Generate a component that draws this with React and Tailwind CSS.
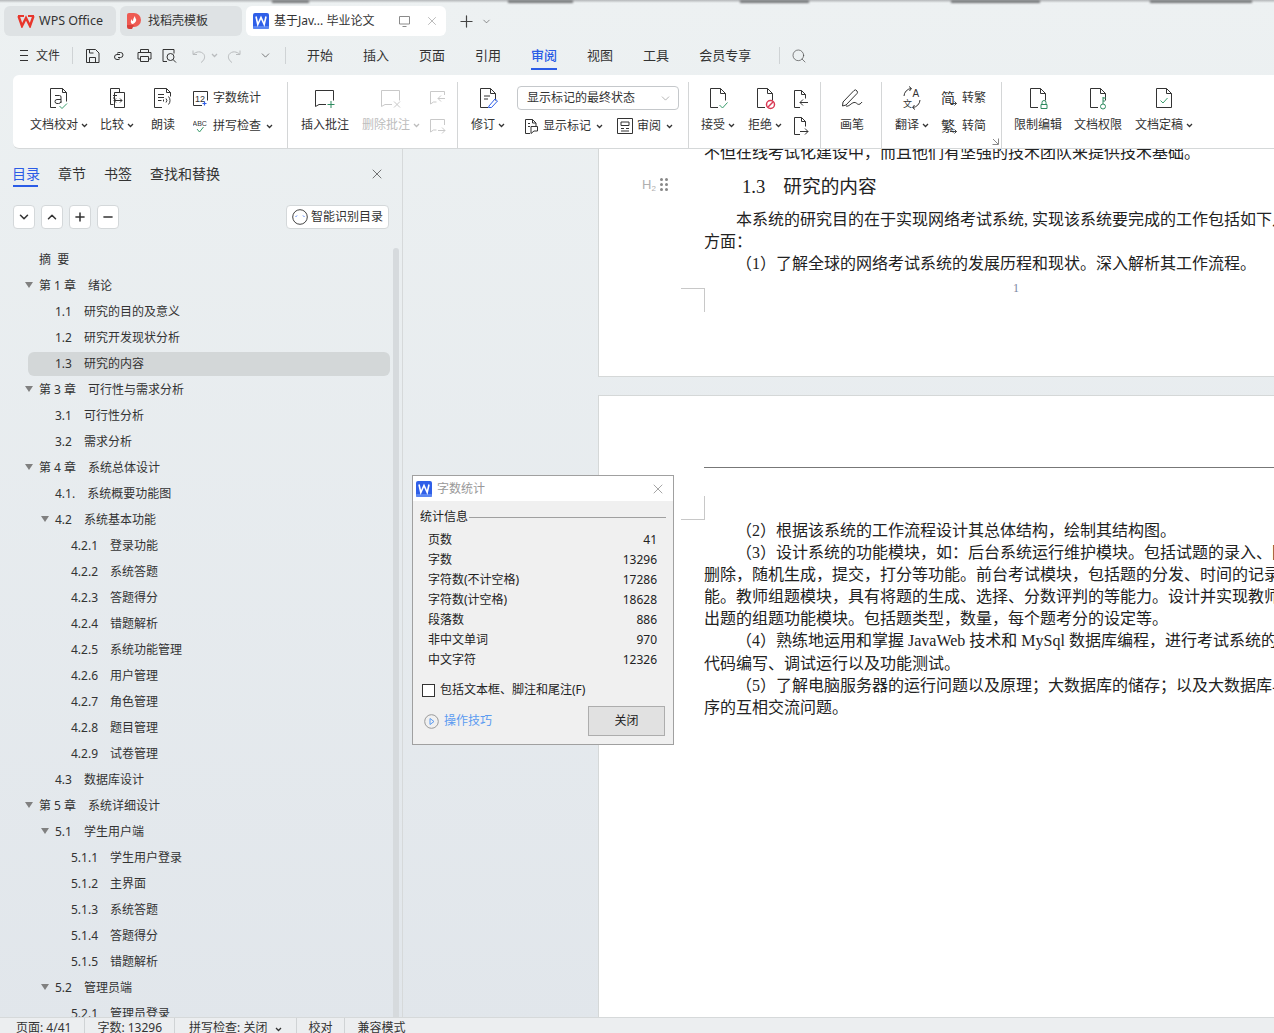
import React from 'react';
import { X, Plus, Minus, ChevronDown, ChevronUp, Search } from 'lucide-react';

const Ico = ({ size = 24, view = 24, className = '', children }) => (
  <svg width={size} height={size} viewBox={`0 0 ${view} ${view}`} fill="none" stroke="currentColor" strokeWidth="1" className={`shrink-0 ${className}`}>
    {children}
  </svg>
);

const Caret = ({ className = '' }) => (
  <svg width="7" height="5" viewBox="0 0 7 5" fill="none" stroke="currentColor" strokeWidth="1.3" className={`shrink-0 ${className}`}>
    <path d="M1 1l2.5 2.5L6 1" />
  </svg>
);

const Doc = ({ children }) => (
  <Ico>
    <path d="M12 21.5H4.5v-19h10l5 5v7" stroke="#333" />
    <path d="M14.5 2.5v5h5" stroke="#333" />
    {children}
  </Ico>
);

const WordLogo = ({ size = 16 }) => (
  <svg width={size} height={size} viewBox="0 0 16 16" className="shrink-0">
    <rect width="16" height="16" rx="2" fill="#2f5fe8" />
    <rect y="13" width="16" height="3" rx="1" fill="#5b86f2" />
    <path d="M3 3.5l1.8 8 3.2-7 3.200 7 1.800-8" fill="none" stroke="#fff" strokeWidth="1.600" />
  </svg>
);

const BigBtn = ({ icon, label, caret, width, className = '', dim }) => (
  <div className={`flex flex-col items-center shrink-0 ${width} ${className}`}>
    <div className="h-[24px] flex items-center justify-center">{icon}</div>
    <div className={`mt-[6px] h-[18px] flex items-center gap-[3px] whitespace-nowrap ${dim ? 'text-[#bdbdbd]' : ''}`}>
      {label}
      {caret && <Caret />}
    </div>
  </div>
);

const Sep = ({ className = '' }) => <div className={`w-px h-[66px] bg-[#d4d6d7] shrink-0 ${className}`} />;

const Ribbon = () => (
  <div className="ml-[13px] mt-[3px] h-[74px] bg-white rounded-l-[6px] border-b border-[#d5d8d9] flex items-start pt-[7px] text-[12px] text-[#333] overflow-hidden">
    <BigBtn
      width="w-[60px]"
      className="ml-[16px] pt-[4px]"
      label="文档校对"
      caret
      icon={
        <Ico>
          <path d="M9 21.500H3.500v-19h12l4 4v9" stroke="#333" />
          <path d="M15.500 2.500v4h4" stroke="#333" />
          <path d="M8 9.500h4.500a1.500 1.500 0 0 1 1.500 1.500v6M14 13.500H10a2 2 0 0 0 0 4h1.500a2.500 2.500 0 0 0 2.500-2" stroke="#333" />
          <path d="M12.500 20l2.500 2.500 5-5" stroke="#3a9c6d" />
        </Ico>
      }
    />
    <BigBtn
      width="w-[34px]"
      className="ml-[11px] pt-[4px]"
      label="比较"
      caret
      icon={
        <Ico>
          <path d="M5.500 2.500h9v4M5.500 2.500v16h3M9.500 6.500h10v15h-10z" stroke="#333" />
          <path d="M8 9.500h4M8 12h2M9 14.500h8M9 14.500l2-2M9 14.500l2 2M17 14.500l-2-2M17 14.500l-2 2" stroke="#333" />
        </Ico>
      }
    />
    <BigBtn
      width="w-[24px]"
      className="ml-[17px] pt-[4px]"
      label="朗读"
      icon={
        <Ico>
          <path d="M11 21.500H3.500v-19h12l4 4v4" stroke="#333" />
          <path d="M15.500 2.500v4h4M7 8.500h6M7 11.500h6M7 14.500h3.500" stroke="#333" />
          <path d="M15 12.500a3 3 0 0 1 0 4M17.500 10.500a6 6 0 0 1 0 8M12.500 13.500v2" stroke="#333" />
        </Ico>
      }
    />
    <div className="ml-[18px] w-[84px] shrink-0 flex flex-col pt-[4px]">
      <div className="h-[24px] flex items-center gap-[5px] whitespace-nowrap">
        <Ico size={15} view={15}>
          <path d="M9 14.500H.500V.500h14v9" stroke="#333" />
          <path d="M11.500 10.500v4M9.500 12.500h4" stroke="#2f5fe8" strokeWidth="1.200" />
          <text x="2" y="10.500" fontSize="9" fill="#333" stroke="none" fontFamily="Liberation Sans">12</text>
        </Ico>
        字数统计
      </div>
      <div className="mt-[4px] h-[24px] flex items-center gap-[5px] whitespace-nowrap">
        <Ico size={15} view={15}>
          <text x="-.5" y="7" fontSize="7" fill="#333" stroke="none" fontFamily="Liberation Sans">ABC</text>
          <path d="M4 10l2.500 3 4-5" stroke="#3a9c6d" />
        </Ico>
        拼写检查
        <Caret />
      </div>
    </div>
    <Sep className="ml-[10px]" />
    <BigBtn
      width="w-[48px]"
      className="ml-[13px] pt-[4px]"
      label="插入批注"
      icon={
        <Ico>
          <path d="M13 18.500H6l-3.500 2v-16h18v10" stroke="#333" />
          <path d="M18 15v7M14.500 18.500h7" stroke="#2d8a5f" />
        </Ico>
      }
    />
    <BigBtn
      width="w-[60px]"
      className="ml-[12px] pt-[4px]"
      label="删除批注"
      caret
      dim
      icon={
        <Ico>
          <path d="M13 18.500H6l-3.500 2v-16h18v10" stroke="#c9c9c9" />
          <path d="M15 15.500l6 6M21 15.500l-6 6" stroke="#c9c9c9" />
        </Ico>
      }
    />
    <div className="ml-[8px] w-[16px] shrink-0 flex flex-col items-center gap-[11px] pt-[8px]">
      <Ico size={17} view={17}>
        <path d="M15.500 5V1.500h-14V14l3-2h3" stroke="#c9c9c9" />
        <path d="M16 8.500H9M9 8.500l3-3M9 8.500l3 3" stroke="#c9c9c9" />
      </Ico>
      <Ico size={17} view={17}>
        <path d="M15.500 7V1.500h-14V14l3-2h3" stroke="#c9c9c9" />
        <path d="M9 12.500h7M16 12.500l-3-3M16 12.500l-3 3" stroke="#c9c9c9" />
      </Ico>
    </div>
    <Sep className="ml-[12px]" />
    <BigBtn
      width="w-[34px]"
      className="ml-[13px] pt-[4px]"
      label="修订"
      caret
      icon={
        <Doc>
          <path d="M8 10h6M8 13h4" stroke="#333" />
          <path d="M13 20l6-7 2.500 2-6 6.500h-3z" stroke="#2f5fe8" />
        </Doc>
      }
    />
    <div className="ml-[12px] w-[162px] shrink-0 flex flex-col">
      <div className="h-[24px] mt-[4px] rounded-[4px] border border-[#c5c8cb] flex items-center justify-between pl-[9px] pr-[6px]">
        <span className="whitespace-nowrap">显示标记的最终状态</span>
        <ChevronDown size={13} strokeWidth={1} className="text-[#777]" />
      </div>
      <div className="mt-[7px] h-[18px] flex items-center whitespace-nowrap">
        <span className="ml-[7px] mr-[4px]">
          <Ico size={15} view={15}>
            <path d="M6 14.500H1.500V.500h7l3.500 3.500v3M8.500.500V4H12M4 4.500h2M4 7.500h2M7 7.500h6.500V12H10l-3 2.500z" stroke="#333" />
          </Ico>
        </span>
        显示标记
        <Caret className="ml-[5px]" />
        <span className="ml-[14px] mr-[4px]">
          <Ico size={16} view={16}>
            <path d="M.500.500h15v15H.500zM4 4h8v3.500H4zM4 10.500h3M9 10.500h3M4 13h8" stroke="#333" />
          </Ico>
        </span>
        审阅
        <Caret className="ml-[5px]" />
      </div>
    </div>
    <Sep className="ml-[9px]" />
    <BigBtn
      width="w-[34px]"
      className="ml-[12px] pt-[4px]"
      label="接受"
      caret
      icon={
        <Doc>
          <path d="M13.500 19l3 3 5-5.500" stroke="#3a9c6d" />
        </Doc>
      }
    />
    <BigBtn
      width="w-[34px]"
      className="ml-[13px] pt-[4px]"
      label="拒绝"
      caret
      icon={
        <Doc>
          <circle cx="17.500" cy="18.500" r="4" stroke="#d93a55" strokeWidth="1.500" />
          <path d="M14.800 21.200l5.400-5.400" stroke="#d93a55" strokeWidth="1.500" />
        </Doc>
      }
    />
    <div className="ml-[11px] w-[16px] shrink-0 flex flex-col items-center gap-[9px] pt-[8px]">
      <Ico size={18} view={18}>
        <path d="M8 17.500H2.500V.500h7l4 4v4M9.500.500v4h4" stroke="#333" />
        <path d="M16 12.500H8M8 12.500l3-3M8 12.500l3 3" stroke="#333" />
      </Ico>
      <Ico size={18} view={18}>
        <path d="M8 17.500H2.500V.500h7l4 4v5M9.500.500v4h4" stroke="#333" />
        <path d="M8 14.500h8M16 14.500l-3-3M16 14.500l-3 3" stroke="#333" />
      </Ico>
    </div>
    <Sep className="ml-[11px]" />
    <BigBtn
      width="w-[24px]"
      className="ml-[19px] pt-[4px]"
      label="画笔"
      icon={
        <Ico>
          <path d="M3 16L14 4.500a2 2 0 0 1 3 .500 2 2 0 0 1 0 2.500L6 19l-3.500 1z" stroke="#333" />
          <path d="M6 20c3 1 5-3 8-3.500 3-.500 3 3 6 1.500 1-.500 1.500-1.500 2-2" stroke="#333" />
        </Ico>
      }
    />
    <Sep className="ml-[17px]" />
    <BigBtn
      width="w-[34px]"
      className="ml-[13px] pt-[4px]"
      label="翻译"
      caret
      icon={
        <Ico>
          <path d="M4 10a8 8 0 0 1 7-7.500M9 .500l2.500 2-2 2.500M20 14a8 8 0 0 1-7 7.500M15 23.500l-2.500-2 2-2.500" stroke="#333" />
          <text x="12.500" y="10.500" fontSize="10" fill="#333" stroke="none" fontFamily="Liberation Sans">A</text>
          <text x="3" y="21" fontSize="9" fill="#333" stroke="none" fontFamily="Noto Sans CJK SC">文</text>
        </Ico>
      }
    />
    <div className="ml-[12px] shrink-0 flex flex-col pt-[4px]">
      <div className="h-[24px] flex items-center gap-[5px] whitespace-nowrap">
        <Ico size={16} view={16}>
          <text x="0" y="13" fontSize="14" fill="#333" stroke="none" fontFamily="Noto Sans CJK SC">简</text>
          <path d="M9 13.500h6.500M15.500 13.500l-2-2M15.500 13.500l-2 2" stroke="#333" strokeWidth=".9" />
        </Ico>
        转繁
      </div>
      <div className="mt-[4px] h-[24px] flex items-center gap-[5px] whitespace-nowrap">
        <Ico size={16} view={16}>
          <text x="0" y="13" fontSize="14" fill="#333" stroke="none" fontFamily="Noto Sans CJK SC">繁</text>
          <path d="M9 13.500h6.500M15.500 13.500l-2-2M15.500 13.500l-2 2" stroke="#333" strokeWidth=".9" />
        </Ico>
        转简
      </div>
    </div>
    <div className="self-end mb-[3px] ml-[6px] text-[#888] shrink-0">
      <Ico size={7} view={7}>
        <path d="M.500 6.500h6v-6M1 1l5 5" />
      </Ico>
    </div>
    <Sep className="ml-[2px]" />
    <BigBtn
      width="w-[48px]"
      className="ml-[12px] pt-[4px]"
      label="限制编辑"
      icon={
        <Doc>
          <path d="M15 20h6v4h-6z" stroke="#2d8a5f" transform="translate(0 -1.500)" />
          <path d="M16 18.500v-2a2 2 0 0 1 4 0v2" stroke="#2d8a5f" />
        </Doc>
      }
    />
    <BigBtn
      width="w-[48px]"
      className="ml-[12px] pt-[4px]"
      label="文档权限"
      icon={
        <Doc>
          <circle cx="17" cy="20.500" r="2.500" stroke="#2d8a5f" />
          <path d="M17 18v-7M17 12h3M17 15h2" stroke="#2d8a5f" />
        </Doc>
      }
    />
    <BigBtn
      width="w-[60px]"
      className="ml-[12px] pt-[4px]"
      label="文档定稿"
      caret
      icon={
        <Ico>
          <path d="M4.500 2.500h10l5 5v14h-15z" stroke="#333" />
          <path d="M14.500 2.500v5h5" stroke="#333" />
          <path d="M8.500 14.500l2.500 2.500 4.500-5" stroke="#3a9c6d" />
        </Ico>
      }
    />
  </div>
);

const TopBar = () => (
  <div className="h-[36px] pt-[6px] pl-[4px] flex items-stretch text-[12px] text-[#333]">
    <div className="w-[112px] rounded-[6px] bg-[#dee2e4] flex items-center pl-[13px] gap-[4px] text-[12.500px]">
      <svg width="18" height="14" viewBox="0 0 18 14" fill="none" stroke="#e8362c" strokeWidth="2.400" className="shrink-0">
        <path d="M1.500 2l3.500 10 4-8 4 8 3.500-10" />
        <path d="M1 2h6M11 2h6" strokeWidth="1.800" />
      </svg>
      WPS Office
    </div>
    <div className="ml-[4px] w-[122px] rounded-[6px] bg-[#dee2e4] flex items-center pl-[7px] gap-[7px]">
      <svg width="14" height="16" viewBox="0 0 14 16" className="shrink-0">
        <path d="M0 2a2 2 0 0 1 2-2h5a7 7 0 0 1 0 14H0z" fill="#ee5a52" />
        <path d="M0 12h7l-2 4H2a2 2 0 0 1-2-2z" fill="#d9403a" />
        <path d="M5 11c-2-2-1-4 0-5 0 2 .500 2 1 2 0-2 1-4 2-5 0 3 2 3 1 5-.500 1.500-2 3-4 3z" fill="#fff" />
      </svg>
      找稻壳模板
    </div>
    <div className="ml-[4px] w-[200px] rounded-[6px] bg-white flex items-center pl-[7px]">
      <WordLogo />
      <span className="ml-[5px] w-[124px] whitespace-nowrap">基于Jav... 毕业论文</span>
      <Ico size={13} view={13} className="text-[#8a8a8a]">
        <path d="M1.500 1.500h10v7.500h-10zM4.500 11.500h4" />
      </Ico>
      <X size={14} strokeWidth={1} className="ml-[14px] text-[#8a8a8a]" />
    </div>
    <Plus size={19} strokeWidth={1.5} className="ml-[11px] self-center text-[#444]" />
    <ChevronDown size={11} strokeWidth={1.4} className="ml-[5px] self-center text-[#555]" />
  </div>
);

const MenuBar = () => (
  <div className="h-[33px] mt-[3px] flex items-center pl-[20px] text-[13px] text-[#333]">
    <svg width="8" height="11" viewBox="0 0 8 11" stroke="#333" className="shrink-0">
      <path d="M0 .500h8M0 5.500h8M0 10.500h8" />
    </svg>
    <span className="ml-[8px] text-[12px]">文件</span>
    <div className="ml-[12px] w-px h-[17px] bg-[#cfd3d5]" />
    <Ico size={16} view={16} className="ml-[12px]">
      <path d="M1.500 1.500h9l3.500 3.500v9.500H1.500zM4.500 1.500v3.500h4M4.500 14.500v-5h6v5" />
    </Ico>
    <Ico size={14} view={14} className="ml-[11px]">
      <path d="M6 8.500H8.500a2.500 2.500 0 0 0 0-5H7a2.500 2.500 0 0 0-2 1M8 5.500H5a2.500 2.500 0 0 0 0 5h1a2.500 2.500 0 0 0 2-1" />
    </Ico>
    <Ico size={15} view={15} className="ml-[11px]">
      <path d="M3.500 4.500v-3h8v3M3.500 11H1V4.500h13V11h-2.500M3.500 8.500h8v5h-8z" />
    </Ico>
    <Ico size={15} view={15} className="ml-[10px]">
      <path d="M5 13.500H1V1.500h11v4" />
      <circle cx="8.500" cy="9" r="3.500" />
      <path d="M11 11.500l3 3" />
    </Ico>
    <Ico size={14} view={14} className="ml-[15px] text-[#b9bcbe]">
      <path d="M1 1.500v4h4M1 5.500c3-3 8-4 11 0 1.500 3 0 6-3 8" />
    </Ico>
    <Caret className="ml-[5px] text-[#b9bcbe]" />
    <Ico size={14} view={14} className="ml-[9px] text-[#b9bcbe]">
      <path d="M13 1.500v4H9M13 5.500c-3-3-8-4-11 0-1.500 3 0 6 3 8" />
    </Ico>
    <ChevronDown size={13} strokeWidth={1.4} className="ml-[18px] text-[#555]" />
    <div className="ml-[13px] w-px h-[17px] bg-[#cfd3d5]" />
    <div className="ml-[21px] flex items-center gap-[30px]">
      <span>开始</span>
      <span>插入</span>
      <span>页面</span>
      <span>引用</span>
      <span className="relative text-[#2b5ce6] font-medium">
        审阅
        <span className="absolute left-0 right-0 -bottom-[5px] h-[2px] bg-[#2b5ce6]" />
      </span>
      <span>视图</span>
      <span>工具</span>
      <span>会员专享</span>
    </div>
    <div className="ml-[28px] w-px h-[17px] bg-[#cfd3d5]" />
    <Search size={16} strokeWidth={1} className="ml-[11px] text-[#444]" />
  </div>
);

const toc = [
  { lv: 1, text: '摘  要' },
  { lv: 1, arrow: true, num: '第 1 章', text: '绪论' },
  { lv: 2, num: '1.1', text: '研究的目的及意义' },
  { lv: 2, num: '1.2', text: '研究开发现状分析' },
  { lv: 2, num: '1.3', text: '研究的内容', active: true },
  { lv: 1, arrow: true, num: '第 3 章', text: '可行性与需求分析' },
  { lv: 2, num: '3.1', text: '可行性分析' },
  { lv: 2, num: '3.2', text: '需求分析' },
  { lv: 1, arrow: true, num: '第 4 章', text: '系统总体设计' },
  { lv: 2, num: '4.1.', text: '系统概要功能图' },
  { lv: 2, arrow: true, num: '4.2', text: '系统基本功能' },
  { lv: 3, num: '4.2.1', text: '登录功能' },
  { lv: 3, num: '4.2.2', text: '系统答题' },
  { lv: 3, num: '4.2.3', text: '答题得分' },
  { lv: 3, num: '4.2.4', text: '错题解析' },
  { lv: 3, num: '4.2.5', text: '系统功能管理' },
  { lv: 3, num: '4.2.6', text: '用户管理' },
  { lv: 3, num: '4.2.7', text: '角色管理' },
  { lv: 3, num: '4.2.8', text: '题目管理' },
  { lv: 3, num: '4.2.9', text: '试卷管理' },
  { lv: 2, num: '4.3', text: '数据库设计' },
  { lv: 1, arrow: true, num: '第 5 章', text: '系统详细设计' },
  { lv: 2, arrow: true, num: '5.1', text: '学生用户端' },
  { lv: 3, num: '5.1.1', text: '学生用户登录' },
  { lv: 3, num: '5.1.2', text: '主界面' },
  { lv: 3, num: '5.1.3', text: '系统答题' },
  { lv: 3, num: '5.1.4', text: '答题得分' },
  { lv: 3, num: '5.1.5', text: '错题解析' },
  { lv: 2, arrow: true, num: '5.2', text: '管理员端' },
  { lv: 3, num: '5.2.1', text: '管理员登录' },
];

const rowPad = { 1: 'pl-[11px]', 2: 'pl-[27px]', 3: 'pl-[43px]' };
const arrowPad = { 1: 'left-[-3px]', 2: 'left-[13px]', 3: 'left-[29px]' };

const TocRow = ({ item }) => (
  <div className={`relative h-[24px] mb-[2px] flex items-center whitespace-pre rounded-[6px] ${rowPad[item.lv]} ${item.active ? 'bg-[#d3d7d8]' : ''}`}>
    {item.arrow && <div className={`absolute top-[8px] ${arrowPad[item.lv]} w-0 h-0 border-x-[4px] border-x-transparent border-t-[6px] border-t-[#808080]`} />}
    {item.num && <span className="mr-[12px]">{item.num}</span>}
    <span>{item.text}</span>
  </div>
);

const SmallBtn = ({ children }) => (
  <div className="w-[22px] h-[24px] rounded-[4px] bg-white border border-[#d4d8da] flex items-center justify-center text-[#333]">{children}</div>
);

const Sidebar = () => (
  <div className="w-[403px] shrink-0 border-r border-[#d6d9da] flex flex-col overflow-hidden text-[#333]">
    <div className="h-[48px] pl-[12px] pr-[17px] flex items-start pt-[14px] text-[14px]">
      <span className="relative text-[#2b5ce6]">
        目录
        <span className="absolute left-[1px] right-[2px] -bottom-[3px] h-[2px] bg-[#2b5ce6]" />
      </span>
      <span className="ml-[18px]">章节</span>
      <span className="ml-[18px]">书签</span>
      <span className="ml-[18px]">查找和替换</span>
      <X size={16} strokeWidth={1} className="ml-auto mt-[3px] text-[#333]" />
    </div>
    <div className="mt-[8px] px-[13px] flex items-center gap-[6px]">
      <SmallBtn><ChevronDown size={14} strokeWidth={2.600} /></SmallBtn>
      <SmallBtn><ChevronUp size={14} strokeWidth={2.600} /></SmallBtn>
      <SmallBtn><Plus size={14} strokeWidth={2.600} /></SmallBtn>
      <SmallBtn><Minus size={14} strokeWidth={2.600} /></SmallBtn>
      <div className="ml-auto h-[24px] w-[103px] rounded-[4px] bg-white border border-[#d4d8da] flex items-center pl-[5px] gap-[3px] text-[12px]">
        <svg width="16" height="16" viewBox="0 0 16 16" fill="none" className="shrink-0">
          <circle cx="8" cy="8" r="7.300" stroke="#444" />
          <path d="M3.500 8l1.500-1.500M12.500 8L11 6.500" stroke="#4d7df0" />
        </svg>
        智能识别目录
      </div>
    </div>
    <div className="relative flex-1 mt-[19px] overflow-hidden text-[12px] pl-[28px] pr-[12px]">
      {toc.map((item) => (
        <TocRow key={item.num ? item.num + item.text : item.text} item={item} />
      ))}
      <div className="absolute top-0 bottom-0 right-[3px] w-[6px] rounded-t-[3px] bg-[#d6dadd]" />
    </div>
  </div>
);

const CropMark = ({ className }) => (
  <div className={`absolute w-[24px] h-[24px] ${className}`} />
);

const docLine = 'h-[22.100px] leading-[22.100px] whitespace-pre overflow-hidden';

const DocArea = () => (
  <div className="flex-1 min-w-0 overflow-hidden pl-[195px] text-[16px] text-[#222] font-['Liberation_Serif','Noto_Sans_CJK_SC',serif]">
    <div className="relative h-[228px] bg-white border-b border-l border-[#d5d8d8] overflow-hidden pl-[105px]">
      <div className={`${docLine} -mt-[7px]`}>不但在线考试化建设中，而且他们有坚强的技术团队来提供技术基础。</div>
      <div className="mt-[10px] h-[26px] flex items-center text-[18.670px] whitespace-pre pl-[38px]">
        <span>1.3</span>
        <span className="ml-[18px]">研究的内容</span>
      </div>
      <div className="absolute left-[43px] top-[29px] flex items-center gap-[4px] text-[#b0b0b0]">
        <span className="text-[13px] leading-none font-['Liberation_Sans',sans-serif]">H<sub className="text-[8px]">2</sub></span>
        <div className="grid grid-cols-2 gap-[2px]">
          {[1, 2, 3, 4, 5, 6].map((n) => (
            <span key={n} className="w-[3px] h-[3px] rounded-full bg-[#888]" />
          ))}
        </div>
      </div>
      <div className="mt-[9px]">
        <div className={`${docLine} pl-[32px]`}>本系统的研究目的在于实现网络考试系统, 实现该系统要完成的工作包括如下几个</div>
        <div className={docLine}>方面：</div>
        <div className={`${docLine} pl-[32px]`}>（1）了解全球的网络考试系统的发展历程和现状。深入解析其工作流程。</div>
      </div>
      <div className="ml-[309px] mt-[6px] text-[12px] leading-[14px] text-[#7a86a0]">1</div>
      <CropMark className="left-[82px] top-[139px] border-t border-r border-[#c8c8c8]" />
    </div>
    <div className="relative mt-[18px] h-[640px] bg-white border-t border-l border-[#d5d8d8] overflow-hidden pl-[105px]">
      <div className="mt-[71px] h-px bg-[#777]" />
      <CropMark className="left-[82px] top-[100px] border-b border-r border-[#c8c8c8]" />
      <div className="mt-[52px]">
        <div className={`${docLine} pl-[32px]`}>（2）根据该系统的工作流程设计其总体结构，绘制其结构图。</div>
        <div className={`${docLine} pl-[32px]`}>（3）设计系统的功能模块，如：后台系统运行维护模块。包括试题的录入、附加</div>
        <div className={docLine}>删除，随机生成，提交，打分等功能。前台考试模块，包括题的分发、时间的记录等功</div>
        <div className={docLine}>能。教师组题模块，具有将题的生成、选择、分数评判的等能力。设计并实现教师端</div>
        <div className={docLine}>出题的组题功能模块。包括题类型，数量，每个题考分的设定等。</div>
        <div className={`${docLine} pl-[32px]`}>（4）熟练地运用和掌握 JavaWeb 技术和 MySql 数据库编程，进行考试系统的设计</div>
        <div className={docLine}>代码编写、调试运行以及功能测试。</div>
        <div className={`${docLine} pl-[32px]`}>（5）了解电脑服务器的运行问题以及原理；大数据库的储存；以及大数据库与程</div>
        <div className={docLine}>序的互相交流问题。</div>
      </div>
    </div>
  </div>
);

const stats = [
  ['页数', '41'],
  ['字数', '13296'],
  ['字符数(不计空格)', '17286'],
  ['字符数(计空格)', '18628'],
  ['段落数', '886'],
  ['非中文单词', '970'],
  ['中文字符', '12326'],
];

const WordCountDialog = () => (
  <div className="absolute left-[412px] top-[475px] w-[262px] h-[270px] border border-[#a0a0a0] bg-[#f0f0f0] text-[12px] text-[#222]">
    <div className="h-[25px] bg-white flex items-center pl-[3px] pr-[7px]">
      <WordLogo />
      <span className="ml-[5px] text-[#999]">字数统计</span>
      <X size={16} strokeWidth={1} className="ml-auto text-[#777]" />
    </div>
    <div className="mt-[7px] px-[7px] flex items-center">
      <span>统计信息</span>
      <div className="flex-1 h-px bg-[#a0a0a0] ml-[1px]" />
    </div>
    <div className="mt-[4px] pl-[15px] pr-[16px]">
      {stats.map(([label, value]) => (
        <div key={label} className="h-[20px] flex items-center justify-between">
          <span>{label}</span>
          <span>{value}</span>
        </div>
      ))}
    </div>
    <div className="mt-[11px] pl-[9px] flex items-center">
      <div className="w-[13px] h-[13px] border border-[#333] bg-white" />
      <span className="ml-[5px]">包括文本框、脚注和尾注(F)</span>
    </div>
    <div className="mt-[7px] pl-[11px] pr-[8px] flex items-center">
      <svg width="15" height="15" viewBox="0 0 15 15" fill="none" className="shrink-0">
        <circle cx="7.500" cy="7.500" r="6.800" stroke="#999" />
        <path d="M6 4.500l4 3-4 3z" stroke="#5b9bf0" />
      </svg>
      <span className="ml-[5px] text-[#5b9bf0]">操作技巧</span>
      <div className="ml-auto w-[77px] h-[30px] bg-[#e1e1e1] border border-[#adadad] flex items-center justify-center">关闭</div>
    </div>
  </div>
);

const StatusBar = () => (
  <div className="h-[16px] bg-[#eceef0] border-t border-[#d6d9da] flex items-start pl-[16px] text-[12px] leading-[20px] text-[#333] overflow-hidden">
    <span>页面: 4/41</span>
    <div className="ml-[13px] w-px h-[16px] bg-[#d0d3d5]" />
    <span className="ml-[12px]">字数: 13296</span>
    <div className="ml-[12px] w-px h-[16px] bg-[#d0d3d5]" />
    <span className="ml-[14px]">拼写检查: 关闭</span>
    <Caret className="ml-[8px] mt-[9px]" />
    <div className="ml-[14px] w-px h-[16px] bg-[#d0d3d5]" />
    <span className="ml-[11px]">校对</span>
    <div className="ml-[12px] w-px h-[16px] bg-[#d0d3d5]" />
    <span className="ml-[12px]">兼容模式</span>
  </div>
);

export default function App() {
  return (
    <div className="relative w-[1274px] h-[1033px] overflow-hidden flex flex-col bg-linear-to-b from-[#edf1f2] to-[#e1e6eb] font-['Noto_Sans','Noto_Sans_CJK_SC',sans-serif]">
      <div className="absolute top-0 inset-x-0 h-[3px] bg-linear-to-b from-[#b4b7b9] to-transparent" />
      <div className="absolute top-0 left-[272px] w-[37px] h-[3px] bg-[#77797b] blur-[1px]" />
      <div className="absolute top-0 left-[508px] w-[65px] h-[3px] bg-[#77797b] blur-[1px]" />
      <div className="absolute top-0 left-[740px] w-[69px] h-[3px] bg-[#77797b] blur-[1px]" />
      <div className="absolute top-0 left-[951px] w-[89px] h-[3px] bg-[#77797b] blur-[1px]" />
      <div className="absolute top-0 left-[1150px] w-[102px] h-[3px] bg-[#77797b] blur-[1px]" />
      <TopBar />
      <MenuBar />
      <Ribbon />
      <div className="flex-1 min-h-0 flex">
        <Sidebar />
        <DocArea />
      </div>
      <StatusBar />
      <WordCountDialog />
    </div>
  );
}
